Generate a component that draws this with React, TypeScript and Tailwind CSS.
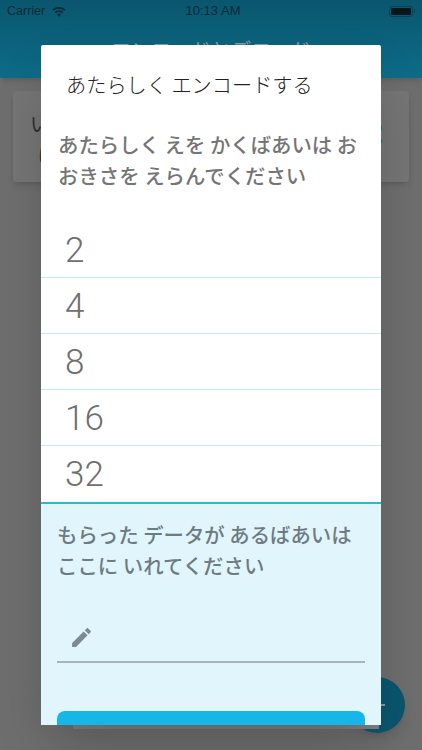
const sizes = ["2", "4", "8", "16", "32"];
const jp = { fontFamily: '"Noto Sans CJK JP", sans-serif' };

function StatusBar() {
  return (
    <div className="grid h-[22px] grid-cols-3 items-center px-[7px] text-[12.5px] text-[#0a2a36]" style={{ fontFamily: '"Liberation Sans", sans-serif' }}>
      <div className="flex items-center gap-[7px]">
        <span>Carrier</span>
        <svg width="14" height="11" viewBox="0 0 15 11">
          <path d="M7.5 11 5.3 8.4a3.3 3.3 0 0 1 4.4 0Z" fill="#0a2a36" />
          <path d="M2.9 5.9a7 7 0 0 1 9.2 0l-1.3 1.4a5.1 5.1 0 0 0-6.6 0Z" fill="#0a2a36" />
          <path d="M.5 3.3a10.6 10.6 0 0 1 14 0l-1.3 1.4a8.7 8.7 0 0 0-11.4 0Z" fill="#0a2a36" />
        </svg>
      </div>
      <span className="pl-[4px] text-center text-[13px] font-medium">10:13 AM</span>
      <div className="flex items-center justify-end gap-[1px]">
        <div className="h-[11px] w-[24px] rounded-[3px] border border-[#0a2a36]/50 p-[1px]">
          <div className="h-full w-full rounded-[1px] bg-[#06161d]" />
        </div>
        <div className="h-[4px] w-[1px] bg-[#0a2a36]/50" />
      </div>
    </div>
  );
}

export default function App() {
  return (
    <div className="relative h-[750px] w-[422px] overflow-hidden bg-[#6e6e6e]" style={jp}>
      <header className="h-[78px] bg-gradient-to-b from-[#0a566e] to-[#0d6c88] shadow-md">
        <StatusBar />
        <div className="pt-[14px] text-center text-[20px] leading-[28px] text-[#8a9a9f]">エンコードとデコード</div>
      </header>

      <div className="mx-[13px] mt-[13px] flex h-[91px] justify-between rounded-[4px] bg-[#757575] pl-[17px] pr-[27px] pt-[16px] text-[20px] leading-[34px] text-[#2e2e2e] shadow-md">
        <div>
          <div>いままでの</div>
          <div className="pl-[8px] text-[16px] leading-[26px]">は</div>
        </div>
        <div className="flex flex-col gap-[9px] pt-[19px]">
          <div className="h-[4px] w-[2px] bg-[#0e7390]" />
          <div className="h-[4px] w-[2px] bg-[#0e7390]" />
        </div>
      </div>

      <div className="absolute bottom-[17px] right-[17px] flex h-[56px] w-[56px] items-center justify-center rounded-full bg-[#0a566e] shadow-lg">
        <div className="h-[2px] w-[16px] bg-[#8a9a9f]" />
      </div>
      <div className="absolute left-[73px] top-[725px] h-[4px] w-[306px] bg-[#808080]" />

      <div className="absolute left-[41px] top-[45px] flex h-[680px] w-[340px] flex-col overflow-hidden rounded-t-[2px] bg-white shadow-2xl">
        <h2 className="pl-[25px] pt-[24px] text-[20.2px] font-light leading-[32px] text-[#222]">あたらしく エンコードする</h2>
        <p className="mt-[28px] px-[17px] text-[20.4px] font-medium leading-[31px] text-[#757575]">
          あたらしく えを かくばあいは おおきさを えらんでください
        </p>

        <ul className="mt-[31px] h-[282px] border-b-2 border-[#2bb8d8]">
          {sizes.map((s, i) => (
            <li key={s} className={`flex h-[56px] items-center pl-[24px] pt-[3px] text-[35px] font-light text-[#6f6f6f] ${i < 4 ? "border-b border-[#c5e9f5]" : ""}`} style={{ fontFamily: "Roboto, sans-serif" }}>
              {s}
            </li>
          ))}
        </ul>

        <div className="flex-1 bg-[#e1f5fd] px-[16px] pt-[15px]">
          <p className="text-[20.4px] font-medium leading-[31px] text-[#6e7b80]">
            もらった データが あるばあいは ここに いれてください
          </p>
          <div className="mt-[33px] flex h-[49px] items-center border-b-2 border-[#a9b4b9] pl-[12px]">
            <svg width="25" height="25" viewBox="0 0 24 24" fill="#7d8a8f">
              <path d="M3 17.25V21h3.75L17.81 9.94l-3.75-3.75L3 17.25zM20.71 7.04c.39-.39.39-1.02 0-1.41l-2.34-2.34c-.39-.39-1.02-.39-1.41 0l-1.83 1.83 3.75 3.75 1.83-1.83z" />
            </svg>
          </div>
          <div className="mt-[48px] h-[20px] rounded-t-[8px] bg-[#16b6e8]" />
        </div>
      </div>
    </div>
  );
}
